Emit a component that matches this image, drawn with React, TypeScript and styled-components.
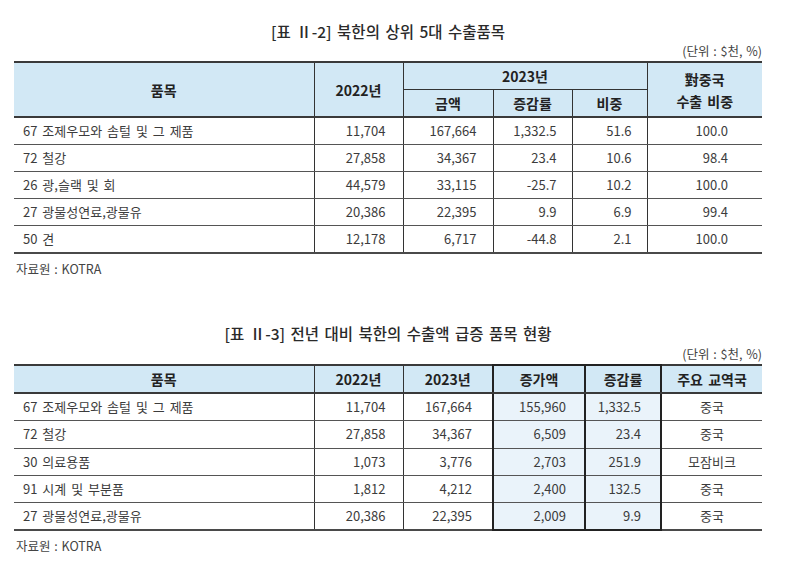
import React from "react";
import styled, { createGlobalStyle } from "styled-components";

const Global = createGlobalStyle`
  html, body { margin: 0; padding: 0; background: #ffffff; }
  body { font-family: "Noto Sans CJK KR", "Noto Sans", sans-serif; color: #3c3c3c; }
`;

const Page = styled.div`
  width: 748px;
  padding: 20px 0 0 14px;
  display: flex;
  flex-direction: column;
`;

const Section = styled.section<{ $top?: number }>`
  display: flex;
  flex-direction: column;
  margin-top: ${(p) => p.$top ?? 0}px;
`;

const Title = styled.h2`
  margin: 0;
  font-size: 15.5px;
  line-height: 22px;
  font-weight: 500;
  color: #2a2a2a;
  text-align: center;
  word-spacing: 2px;
`;

const Unit = styled.div<{ $gap: number }>`
  margin-top: ${(p) => p.$gap}px;
  font-size: 12.5px;
  line-height: 16px;
  color: #444;
  text-align: right;
  word-spacing: 1px;
`;

const Table = styled.table<{ $gap: number }>`
  margin-top: ${(p) => p.$gap}px;
  width: 748px;
  border-collapse: collapse;
  table-layout: fixed;
  border-top: 2px solid #3a3a3a;
  border-bottom: 2px solid #4a4a4a;
`;

const Th = styled.th<{ $box?: boolean; $tall?: boolean }>`
  background: #d2e8f5;
  font-size: 14px;
  font-weight: 700;
  color: #222;
  height: 26px;
  padding: 0;
  line-height: ${(p) => (p.$tall ? 22 : 16)}px;
  word-spacing: 2px;
  border-left: ${(p) => (p.$box ? "2px solid #222" : "1px solid #333")};
  border-right: ${(p) => (p.$box ? "2px solid #222" : "1px solid #333")};
  border-bottom: 2px solid #3a3a3a;
  border-top: ${(p) => (p.$box ? "2px solid #222" : "none")};
  &:first-child { border-left: none; }
  &:last-child { border-right: none; }
`;

const GroupTh = styled(Th)`
  border-bottom: 1px solid #333;
`;

const SubTh = styled(Th)`
  border-top: 1px solid #333;
`;

const Td = styled.td<{
  $align?: "left" | "right" | "center";
  $pad?: number;
  $box?: boolean;
  $h: number;
  $lastBox?: boolean;
}>`
  height: ${(p) => p.$h}px;
  padding: 0 ${(p) => (p.$align === "right" ? p.$pad ?? 16 : 0)}px 0
    ${(p) => (p.$align === "left" ? 9 : 0)}px;
  text-align: ${(p) => p.$align ?? "center"};
  font-size: 13px;
  line-height: 16px;
  word-spacing: 2px;
  color: #3c3c3c;
  background: ${(p) => (p.$box ? "#eaf3fa" : "#ffffff")};
  border-top: 1px solid #555;
  border-left: ${(p) => (p.$box ? "2px solid #222" : "1px solid #333")};
  border-right: ${(p) => (p.$box ? "2px solid #222" : "1px solid #333")};
  border-bottom: ${(p) => (p.$lastBox ? "2px solid #222" : "1px solid #555")};
  white-space: nowrap;
  &:first-child { border-left: none; }
  &:last-child { border-right: none; }
`;

const Source = styled.div<{ $gap: number }>`
  margin-top: ${(p) => p.$gap}px;
  padding-left: 2px;
  font-size: 12.5px;
  line-height: 16px;
  color: #444;
  word-spacing: 1px;
`;

type Row = [string, string, string, string, string, string];

const table1: Row[] = [
  ["67 조제우모와 솜털 및 그 제품", "11,704", "167,664", "1,332.5", "51.6", "100.0"],
  ["72 철강", "27,858", "34,367", "23.4", "10.6", "98.4"],
  ["26 광,슬랙 및 회", "44,579", "33,115", "-25.7", "10.2", "100.0"],
  ["27 광물성연료,광물유", "20,386", "22,395", "9.9", "6.9", "99.4"],
  ["50 견", "12,178", "6,717", "-44.8", "2.1", "100.0"],
];

const table2: Row[] = [
  ["67 조제우모와 솜털 및 그 제품", "11,704", "167,664", "155,960", "1,332.5", "중국"],
  ["72 철강", "27,858", "34,367", "6,509", "23.4", "중국"],
  ["30 의료용품", "1,073", "3,776", "2,703", "251.9", "모잠비크"],
  ["91 시계 및 부분품", "1,812", "4,212", "2,400", "132.5", "중국"],
  ["27 광물성연료,광물유", "20,386", "22,395", "2,009", "9.9", "중국"],
];

export default function App() {
  return (
    <>
      <Global />
      <Page>
        <Section>
          <Title>[표 Ⅱ-2] 북한의 상위 5대 수출품목</Title>
          <Unit $gap={1}>(단위 : $천, %)</Unit>
          <Table $gap={2}>
            <colgroup>
              <col style={{ width: 300 }} />
              <col style={{ width: 89 }} />
              <col style={{ width: 90 }} />
              <col style={{ width: 79 }} />
              <col style={{ width: 75 }} />
              <col style={{ width: 115 }} />
            </colgroup>
            <thead>
              <tr>
                <Th rowSpan={2}>품목</Th>
                <Th rowSpan={2}>2022년</Th>
                <GroupTh colSpan={3}>2023년</GroupTh>
                <Th rowSpan={2} $tall>
                  對중국
                  <br />
                  수출 비중
                </Th>
              </tr>
              <tr>
                <SubTh>금액</SubTh>
                <SubTh>증감률</SubTh>
                <SubTh>비중</SubTh>
              </tr>
            </thead>
            <tbody>
              {table1.map((r) => (
                <tr key={r[0]}>
                  <Td $h={26} $align="left">{r[0]}</Td>
                  <Td $h={26} $align="right" $pad={17}>{r[1]}</Td>
                  <Td $h={26} $align="right" $pad={16}>{r[2]}</Td>
                  <Td $h={26} $align="right" $pad={15}>{r[3]}</Td>
                  <Td $h={26} $align="right" $pad={15}>{r[4]}</Td>
                  <Td $h={26} $align="right" $pad={34}>{r[5]}</Td>
                </tr>
              ))}
            </tbody>
          </Table>
          <Source $gap={7}>자료원 : KOTRA</Source>
        </Section>

        <Section $top={45}>
          <Title>[표 Ⅱ-3] 전년 대비 북한의 수출액 급증 품목 현황</Title>
          <Unit $gap={2}>(단위 : $천, %)</Unit>
          <Table $gap={2}>
            <colgroup>
              <col style={{ width: 300 }} />
              <col style={{ width: 89 }} />
              <col style={{ width: 90 }} />
              <col style={{ width: 92 }} />
              <col style={{ width: 76 }} />
              <col style={{ width: 101 }} />
            </colgroup>
            <thead>
              <tr>
                <Th>품목</Th>
                <Th>2022년</Th>
                <Th>2023년</Th>
                <Th $box>증가액</Th>
                <Th $box>증감률</Th>
                <Th>주요 교역국</Th>
              </tr>
            </thead>
            <tbody>
              {table2.map((r, i) => {
                const last = i === table2.length - 1;
                return (
                  <tr key={r[0]}>
                    <Td $h={26.3} $align="left">{r[0]}</Td>
                    <Td $h={26.3} $align="right" $pad={17}>{r[1]}</Td>
                    <Td $h={26.3} $align="right" $pad={20}>{r[2]}</Td>
                    <Td $h={26.3} $align="right" $pad={18} $box $lastBox={last}>{r[3]}</Td>
                    <Td $h={26.3} $align="right" $pad={19} $box $lastBox={last}>{r[4]}</Td>
                    <Td $h={26.3}>{r[5]}</Td>
                  </tr>
                );
              })}
            </tbody>
          </Table>
          <Source $gap={7}>자료원 : KOTRA</Source>
        </Section>
      </Page>
    </>
  );
}
